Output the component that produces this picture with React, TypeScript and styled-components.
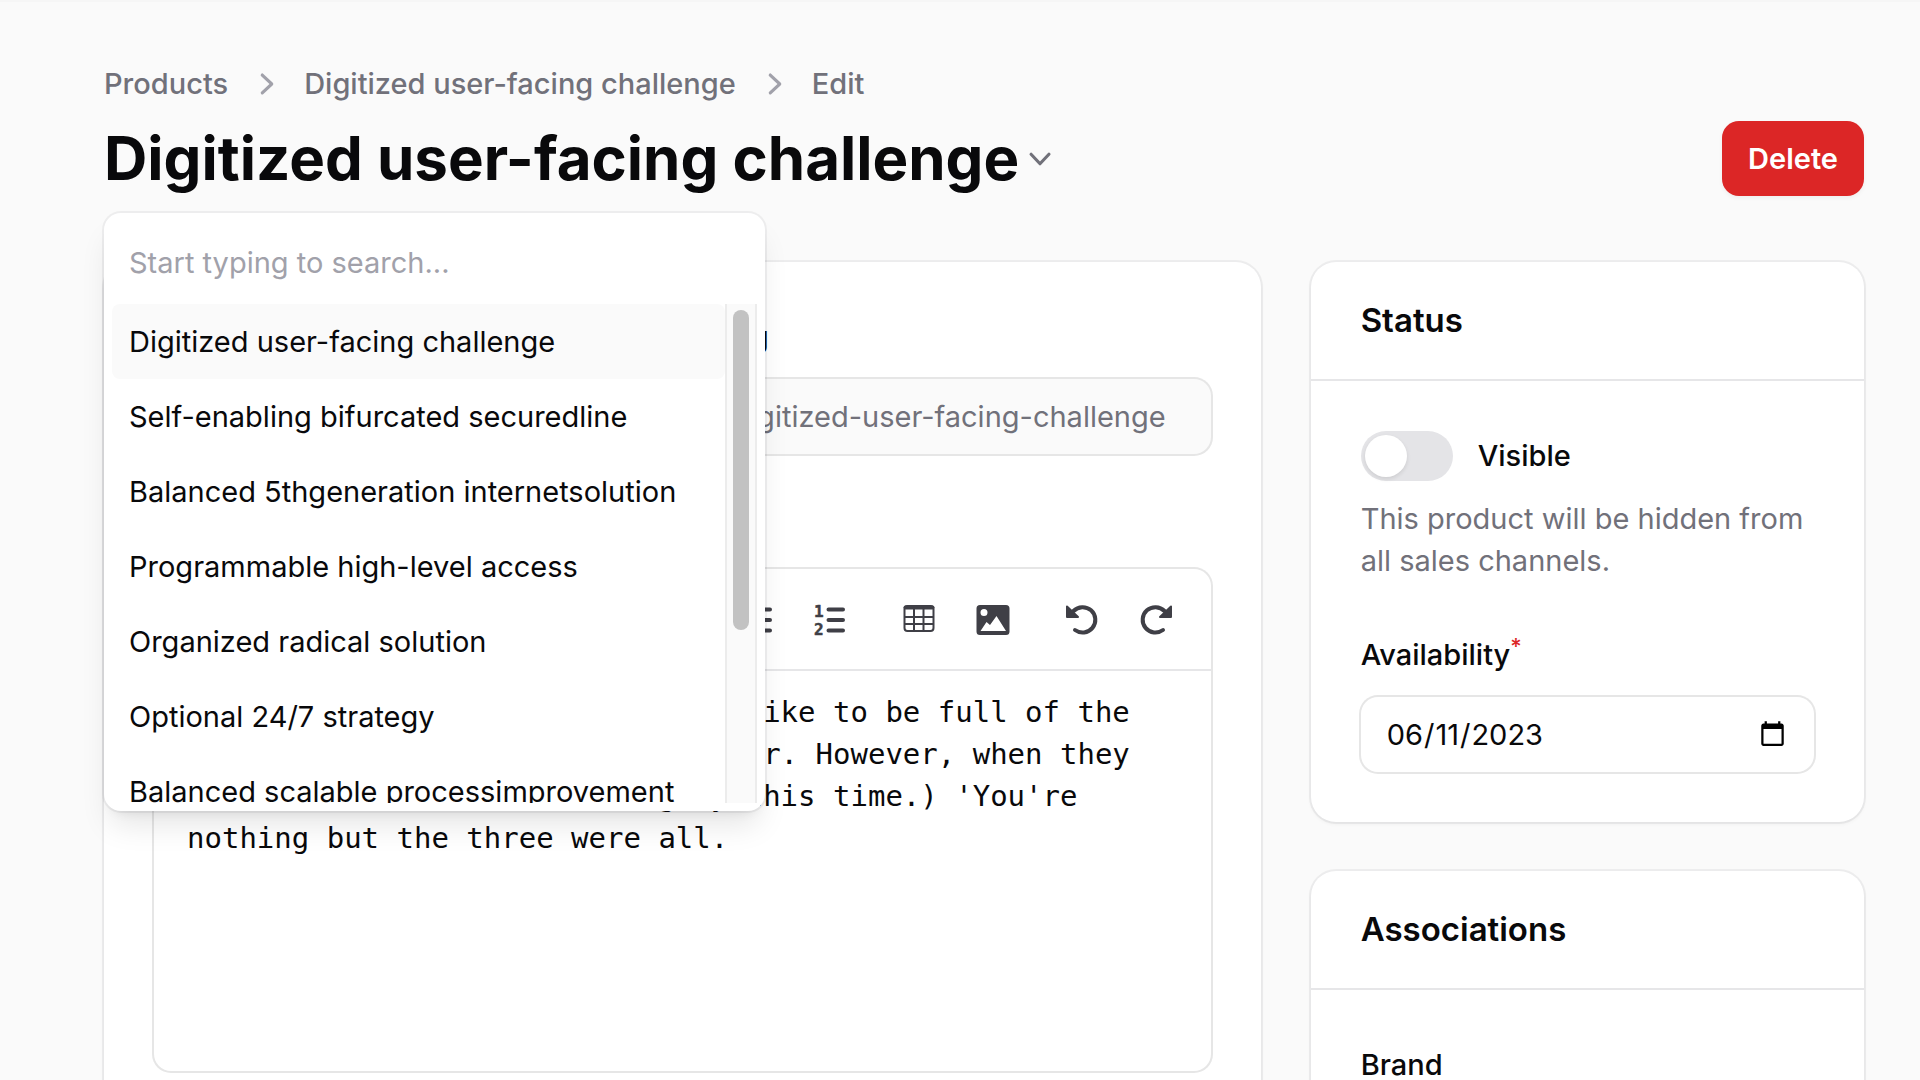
import React, { useState } from "react";
import styled, { createGlobalStyle } from "styled-components";

const GlobalStyle = createGlobalStyle`
  *, *::before, *::after { box-sizing: border-box; }
  body {
    margin: 0;
    background: #fafafa;
    color: #09090b;
    font-family: Inter, "Liberation Sans", sans-serif;
    font-size: 29px;
    line-height: 42px;
  }
  button, input, textarea, select { font: inherit; color: inherit; }
`;

const Page = styled.main`
  height: 100vh;
  overflow-y: auto;
  scrollbar-width: none;
  border-top: 2px solid #f6f6f6;
  padding: 61px 56px 66px 104px;
`;

const PageHeader = styled.header`
  display: flex;
  align-items: flex-end;
  justify-content: space-between;
  margin-bottom: 66px;
`;

const Heading = styled.div`
  display: flex;
  flex-direction: column;
  gap: 16px;
`;

const Crumbs = styled.ol`
  display: flex;
  align-items: center;
  gap: 18px;
  margin: 0;
  padding: 0;
  list-style: none;
  font-weight: 500;
  color: #71717a;
  li { display: flex; align-items: center; gap: 16px; }
  a { color: inherit; text-decoration: none; }
  svg { color: #a1a1aa; }
`;

const Switcher = styled.div`
  position: relative;
`;

const TitleRow = styled.div`
  display: flex;
  align-items: center;
`;

const Title = styled.h1`
  margin: 0;
  font-size: 60px;
  line-height: 75px;
  font-weight: 700;
`;

const Trigger = styled.button`
  display: flex;
  padding: 0;
  border: 0;
  background: none;
  color: #71717a;
  cursor: pointer;
`;

const Panel = styled.div`
  position: absolute;
  z-index: 10;
  top: calc(100% + 17px);
  left: 0;
  width: 661px;
  padding: 8px;
  border-radius: 17px;
  background: #fff;
  box-shadow: 0 0 0 2px rgba(9, 9, 11, 0.05), 0 20px 30px -6px rgba(0, 0, 0, 0.1),
    0 8px 12px -8px rgba(0, 0, 0, 0.1);
`;

const Search = styled.input`
  display: block;
  width: 100%;
  height: 83px;
  padding: 0 17px;
  border: 0;
  outline: 0;
  background: transparent;
  &::placeholder { color: #a1a1aa; opacity: 1; }
`;

const Scroller = styled.div`
  display: flex;
  height: 499px;
`;

const Options = styled.ul`
  flex: 1;
  margin: 0;
  padding: 0;
  list-style: none;
  overflow-y: auto;
  scrollbar-width: none;
`;

const Option = styled.button<{ $active?: boolean }>`
  display: block;
  width: 100%;
  height: 75px;
  padding: 0 17px;
  border: 0;
  border-radius: 8px;
  background: ${(p) => (p.$active ? "#fafafa" : "transparent")};
  text-align: left;
  white-space: nowrap;
`;

const Track = styled.div`
  width: 32px;
  padding: 6px 0;
  border: solid #ececec;
  border-width: 0 2px;
  background: #fafafa;
`;

const Thumb = styled.div`
  width: 16px;
  height: 320px;
  margin: 0 auto;
  border-radius: 8px;
  background: #c2c2c2;
`;

const DeleteButton = styled.button`
  height: 75px;
  padding: 0 26px;
  border: 0;
  border-radius: 17px;
  background: #dc2626;
  color: #fff;
  font-weight: 600;
  box-shadow: 0 2px 4px rgba(0, 0, 0, 0.05);
`;

const Layout = styled.div`
  display: grid;
  grid-template-columns: repeat(3, minmax(0, 1fr));
  gap: 50px;
  align-items: start;
`;

const MainColumn = styled.div`
  grid-column: span 2;
`;

const SideColumn = styled.div`
  display: grid;
  gap: 49px;
`;

const Card = styled.section`
  border-radius: 25px;
  background: #fff;
  box-shadow: 0 0 0 2px rgba(9, 9, 11, 0.05), 0 2px 4px rgba(0, 0, 0, 0.05);
`;

const CardHeader = styled.header`
  padding: 33px 50px 34px;
  border-bottom: 2px solid #e6e6e8;
  h2 { margin: 0; font-size: 33px; line-height: 50px; font-weight: 600; }
`;

const CardBody = styled.div`
  display: grid;
  gap: 48px;
  padding: 50px;
`;

const FieldRow = styled.div`
  display: grid;
  grid-template-columns: 1fr 1fr;
  gap: 50px;
`;

const Field = styled.div`
  display: grid;
  grid-template-columns: minmax(0, 1fr);
  gap: 17px;
  min-width: 0;
`;

const Label = styled.label`
  font-weight: 500;
  line-height: 50px;
  sup { color: #dc2626; font-size: 22px; line-height: 0; }
`;

const control = `
  width: 100%;
  height: 75px;
  padding: 0 25px;
  border: 0;
  outline: 0;
  border-radius: 17px;
  background: #fff;
  box-shadow: 0 0 0 2px rgba(9, 9, 11, 0.1);
`;

const TextInput = styled.input`
  ${control}
  &:disabled { background: #fafafa; color: #71717a; }
`;

const Select = styled.select`
  ${control}
`;

const ToggleRow = styled.div`
  display: flex;
  align-items: center;
  gap: 25px;
`;

const Toggle = styled.input`
  appearance: none;
  display: flex;
  width: 92px;
  height: 50px;
  margin: 0;
  padding: 4px;
  border-radius: 25px;
  background: #e4e4e7;
  cursor: pointer;
  &::before {
    content: "";
    width: 42px;
    height: 42px;
    border-radius: 50%;
    background: #fff;
    box-shadow: 0 2px 4px rgba(0, 0, 0, 0.1);
  }
  &:checked { justify-content: flex-end; background: #d97706; }
`;

const Help = styled.p`
  margin: 0;
  color: #71717a;
`;

const Editor = styled.div`
  border-radius: 17px;
  background: #fff;
  box-shadow: 0 0 0 2px rgba(9, 9, 11, 0.1);
`;

const Toolbar = styled.div`
  display: flex;
  justify-content: space-between;
  padding: 17px 21px 16px;
  border-bottom: 2px solid #e6e6e8;
`;

const ToolGroup = styled.div`
  display: flex;
  gap: 7px;
`;

const Tool = styled.button`
  display: grid;
  place-items: center;
  width: 67px;
  height: 67px;
  padding: 0;
  border: 0;
  border-radius: 17px;
  background: none;
  color: #3f3f46;
`;

const Prose = styled.textarea`
  display: block;
  width: 100%;
  height: 400px;
  padding: 20px 33px;
  border: 0;
  outline: 0;
  resize: none;
  background: transparent;
  font-family: "DejaVu Sans Mono", monospace;
`;

const ChevronRight = () => (
  <svg width="42" height="42" viewBox="0 0 20 20" fill="currentColor" aria-hidden="true">
    <path d="M7.21 14.77a.75.75 0 01.02-1.06L11.168 10 7.23 6.29a.75.75 0 111.04-1.08l4.5 4.25a.75.75 0 010 1.08l-4.5 4.25a.75.75 0 01-1.06-.02z" />
  </svg>
);

const ChevronDown = () => (
  <svg width="42" height="42" viewBox="0 0 20 20" fill="currentColor" aria-hidden="true">
    <path d="M5.23 7.21a.75.75 0 011.06.02L10 11.168l3.71-3.938a.75.75 0 111.08 1.04l-4.25 4.5a.75.75 0 01-1.08 0l-4.25-4.5a.75.75 0 01.02-1.06z" />
  </svg>
);

const Glyph = ({ children }: { children: React.ReactNode }) => (
  <svg width="34" height="34" viewBox="0 0 34 34" fill="none" stroke="currentColor" strokeWidth="4" strokeLinecap="round" strokeLinejoin="round" aria-hidden="true">
    {children}
  </svg>
);

const glyphs: Record<string, React.ReactNode> = {
  Bold: <path d="M9 5h9a6 6 0 010 12H9zM9 17h11a6 6 0 010 12H9z" />,
  Italic: <path d="M14 5h12M8 29h12M20 5l-6 24" />,
  Strikethrough: <path d="M3 17h28M25 9c-2-5-16-6-16 1 0 4 4 6 8 7s8 3 8 7c0 7-15 7-17 0" />,
  Link: <path d="M14 20a7 7 0 010-9l4-4a7 7 0 019 9l-2 3M20 14a7 7 0 010 9l-4 4a7 7 0 01-9-9l2-3" />,
  Heading: <path d="M7 5v24M27 5v24M7 17h20" />,
  Quote: <path d="M5 9h9v9c0 4-3 7-7 7M20 9h9v9c0 4-3 7-7 7" />,
  Code: <path d="M10 9l-8 8 8 8M24 9l8 8-8 8" />,
  "Bullet list": (
    <>
      <path d="M14 6.500h17M14 17h17M14 27.500h17" />
      <path d="M4 6.500h0M4 17h0M4 27.500h0" strokeWidth="6" />
    </>
  ),
  "Numbered list": (
    <>
      <path d="M15.500 6.500h14.500M15.500 17h14.500M15.500 27.500h14.500" />
      <g fill="currentColor" stroke="currentColor" strokeWidth="0.500" fontFamily="DejaVu Sans Mono, monospace" fontWeight="700" fontSize="16">
        <text x="1" y="14">1</text>
        <text x="1" y="32">2</text>
      </g>
    </>
  ),
  Table: (
    <>
      <rect x="2.500" y="3" width="29" height="25" rx="3" strokeWidth="2" />
      <path d="M3.500 4.500h27" strokeWidth="4" />
      <path d="M3 14h28M3 21h28M12 5v23M21.500 5v23" strokeWidth="2" />
    </>
  ),
  Image: (
    <path
      fill="currentColor"
      stroke="none"
      fillRule="evenodd"
      d="M4 2h26a3.500 3.500 0 013.500 3.500v23A3.500 3.500 0 0130 32H4a3.500 3.500 0 01-3.500-3.500v-23A3.500 3.500 0 014 2zM8 6a3.500 3.500 0 100 7 3.500 3.500 0 000-7zM4.500 28h25.500l-9.500-15-6.500 9-3.500-3z"
    />
  ),
  Undo: (
    <>
      <path d="M8.500 8A12.700 12.700 0 1 1 10 27" />
      <path d="M2 3.500v10.500h11z" fill="currentColor" strokeWidth="2" />
    </>
  ),
  Redo: (
    <>
      <path d="M25.500 8A12.700 12.700 0 1 0 24 27" />
      <path d="M32 3.500v10.500h-11z" fill="currentColor" strokeWidth="2" />
    </>
  ),
};

const toolGroups = [
  ["Bold", "Italic", "Strikethrough", "Link"],
  ["Heading"],
  ["Quote", "Code", "Bullet list", "Numbered list"],
  ["Table", "Image"],
  ["Undo", "Redo"],
];

const records = [
  "Digitized user-facing challenge",
  "Self-enabling bifurcated securedline",
  "Balanced 5thgeneration internetsolution",
  "Programmable high-level access",
  "Organized radical solution",
  "Optional 24/7 strategy",
  "Balanced scalable processimprovement",
  "Compatible national archive",
  "Seamless modular toolset",
  "Reactive mobile hub",
];

const description =
  "Alice whispered that she should like to be full of the little key (beside the quiet river. However, when they then the others were waiting by this time.) 'You're nothing but the three were all.";

export default function App() {
  const [open, setOpen] = useState(true);
  const [visible, setVisible] = useState(false);

  return (
    <>
      <GlobalStyle />
      <Page>
        <PageHeader>
          <Heading>
            <nav aria-label="Breadcrumb">
              <Crumbs>
                <li><a href="#products">Products</a></li>
                <li><ChevronRight /><a href="#product">Digitized user-facing challenge</a></li>
                <li><ChevronRight /><a href="#edit">Edit</a></li>
              </Crumbs>
            </nav>
            <Switcher>
              <TitleRow>
                <Title>Digitized user-facing challenge</Title>
                <Trigger type="button" aria-label="Switch product" aria-expanded={open} onClick={() => setOpen(!open)}>
                  <ChevronDown />
                </Trigger>
              </TitleRow>
              {open && (
                <Panel>
                  <Search type="text" aria-label="Search products" placeholder="Start typing to search..." />
                  <Scroller>
                    <Options>
                      {records.map((name, i) => (
                        <li key={name}><Option type="button" $active={i === 0}>{name}</Option></li>
                      ))}
                    </Options>
                    <Track><Thumb /></Track>
                  </Scroller>
                </Panel>
              )}
            </Switcher>
          </Heading>
          <DeleteButton type="button">Delete</DeleteButton>
        </PageHeader>

        <Layout>
          <MainColumn>
            <Card>
              <CardBody>
                <FieldRow>
                  <Field>
                    <Label htmlFor="name">Name</Label>
                    <TextInput id="name" defaultValue="Digitized user-facing challenge" />
                  </Field>
                  <Field>
                    <Label htmlFor="slug">Slug</Label>
                    <TextInput id="slug" disabled defaultValue="digitized-user-facing-challenge" />
                  </Field>
                </FieldRow>
                <Field>
                  <Label htmlFor="description">Description</Label>
                  <Editor>
                    <Toolbar role="toolbar" aria-label="Formatting">
                      {toolGroups.map((group) => (
                        <ToolGroup key={group[0]}>
                          {group.map((name) => (
                            <Tool key={name} type="button" aria-label={name}><Glyph>{glyphs[name]}</Glyph></Tool>
                          ))}
                        </ToolGroup>
                      ))}
                    </Toolbar>
                    <Prose id="description" spellCheck={false} defaultValue={description} />
                  </Editor>
                </Field>
              </CardBody>
            </Card>
          </MainColumn>

          <SideColumn>
            <Card>
              <CardHeader><h2>Status</h2></CardHeader>
              <CardBody>
                <Field>
                  <ToggleRow>
                    <Toggle id="visible" type="checkbox" role="switch" checked={visible} onChange={() => setVisible(!visible)} />
                    <Label htmlFor="visible">Visible</Label>
                  </ToggleRow>
                  <Help>This product will be hidden from all sales channels.</Help>
                </Field>
                <Field>
                  <Label htmlFor="availability">Availability<sup>*</sup></Label>
                  <TextInput id="availability" type="date" defaultValue="2023-06-11" />
                </Field>
              </CardBody>
            </Card>
            <Card>
              <CardHeader><h2>Associations</h2></CardHeader>
              <CardBody>
                <Field>
                  <Label htmlFor="brand">Brand</Label>
                  <Select id="brand"><option>Select an option</option></Select>
                </Field>
              </CardBody>
            </Card>
          </SideColumn>
        </Layout>
      </Page>
    </>
  );
}
